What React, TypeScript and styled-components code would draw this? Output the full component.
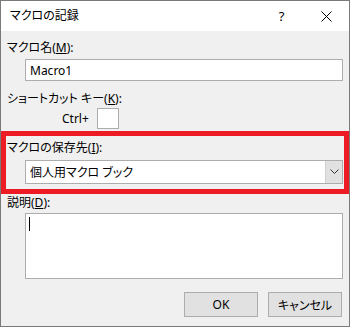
import React from "react";
import styled, { createGlobalStyle } from "styled-components";

const Global = createGlobalStyle`
  html, body { margin: 0; padding: 0; background: #ffffff; }
  * { box-sizing: border-box; }
`;

const FONT = `"Noto Sans", "Noto Sans CJK JP", sans-serif`;

const Dialog = styled.div`
  position: relative;
  width: 350px;
  height: 327px;
  border: 1px solid #7a7a7a;
  background: #f0f0f0;
  font-family: ${FONT};
  font-size: 12px;
  font-feature-settings: "palt";
  color: #000;
  display: flex;
  flex-direction: column;
`;

const TitleBar = styled.div`
  height: 30px;
  background: #ffffff;
  display: flex;
  align-items: center;
  padding-left: 9px;
`;

const TitleText = styled.div`
  flex: 1;
  font-size: 12px;
  line-height: 16px;
`;

const CaptionButton = styled.div`
  width: 45px;
  height: 30px;
  display: flex;
  align-items: center;
  justify-content: center;
  font-size: 13px;
`;

const Body = styled.div`
  display: flex;
  flex-direction: column;
  padding: 0 6px 0 6px;
`;

const Label = styled.div<{ $mt: number }>`
  margin-top: ${(p) => p.$mt}px;
  line-height: 16px;
  height: 16px;
  white-space: nowrap;
`;

const TextBox = styled.div<{ $mt: number; $h: number }>`
  margin-top: ${(p) => p.$mt}px;
  margin-left: 18px;
  height: ${(p) => p.$h}px;
  background: #ffffff;
  border: 1px solid #adadad;
  display: flex;
  align-items: center;
  padding-left: 4px;
`;

const ShortcutRow = styled.div`
  margin-top: 1px;
  margin-left: 55px;
  display: flex;
  align-items: center;
  height: 21px;
`;

const CtrlText = styled.span`
  width: 35px;
`;

const KeyBox = styled.div`
  width: 22px;
  height: 21px;
  background: #ffffff;
  border: 1px solid #adadad;
`;

const Combo = styled.div`
  margin-top: 4px;
  margin-left: 18px;
  height: 24px;
  background: #ffffff;
  border: 1px solid #adadad;
  display: flex;
  align-items: stretch;
`;

const ComboText = styled.div`
  flex: 1;
  display: flex;
  align-items: center;
  padding-left: 4px;
`;

const ComboButton = styled.div`
  width: 17px;
  background: #e1e1e1;
  border-left: 1px solid #d0d0d0;
  display: flex;
  align-items: center;
  justify-content: center;
`;

const Memo = styled.div`
  margin-top: 2px;
  margin-left: 18px;
  height: 66px;
  background: #ffffff;
  border: 1px solid #adadad;
  padding: 3px 0 0 3px;
`;

const Caret = styled.div`
  width: 1px;
  height: 14px;
  background: #000;
`;

const ButtonRow = styled.div`
  margin-top: 13px;
  margin-right: 1px;
  display: flex;
  justify-content: flex-end;
  gap: 10px;
`;

const Button = styled.div`
  width: 74px;
  height: 25px;
  background: #e1e1e1;
  border: 1px solid #adadad;
  display: flex;
  align-items: center;
  justify-content: center;
`;

const Highlight = styled.div`
  position: absolute;
  left: 0px;
  top: 130px;
  width: 348px;
  height: 63px;
  border: 5px solid #ed1c24;
  pointer-events: none;
`;

export default function App() {
  return (
    <>
      <Global />
      <Dialog>
        <TitleBar>
          <TitleText>マクロの記録</TitleText>
          <CaptionButton>?</CaptionButton>
          <CaptionButton>
            <svg width="11" height="11" viewBox="0 0 11 11">
              <path d="M0.5 0.5 L10.5 10.5 M10.5 0.5 L0.5 10.5" stroke="#000" strokeWidth="1" fill="none" />
            </svg>
          </CaptionButton>
        </TitleBar>
        <Body>
          <Label $mt={9}>
            マクロ名(<u>M</u>):
          </Label>
          <TextBox $mt={3} $h={22}>Macro1</TextBox>
          <Label $mt={10}>
            ショートカット キー(<u>K</u>):
          </Label>
          <ShortcutRow>
            <CtrlText>Ctrl+</CtrlText>
            <KeyBox />
          </ShortcutRow>
          <Label $mt={11}>
            マクロの保存先(<u>I</u>):
          </Label>
          <Combo>
            <ComboText>個人用マクロ ブック</ComboText>
            <ComboButton>
              <svg width="9" height="6" viewBox="0 0 9 6">
                <path d="M0.5 0.5 L4.5 4.5 L8.5 0.5" stroke="#333" strokeWidth="1" fill="none" />
              </svg>
            </ComboButton>
          </Combo>
          <Label $mt={11}>
            説明(<u>D</u>):
          </Label>
          <Memo>
            <Caret />
          </Memo>
          <ButtonRow>
            <Button>OK</Button>
            <Button>キャンセル</Button>
          </ButtonRow>
        </Body>
        <Highlight />
      </Dialog>
    </>
  );
}
